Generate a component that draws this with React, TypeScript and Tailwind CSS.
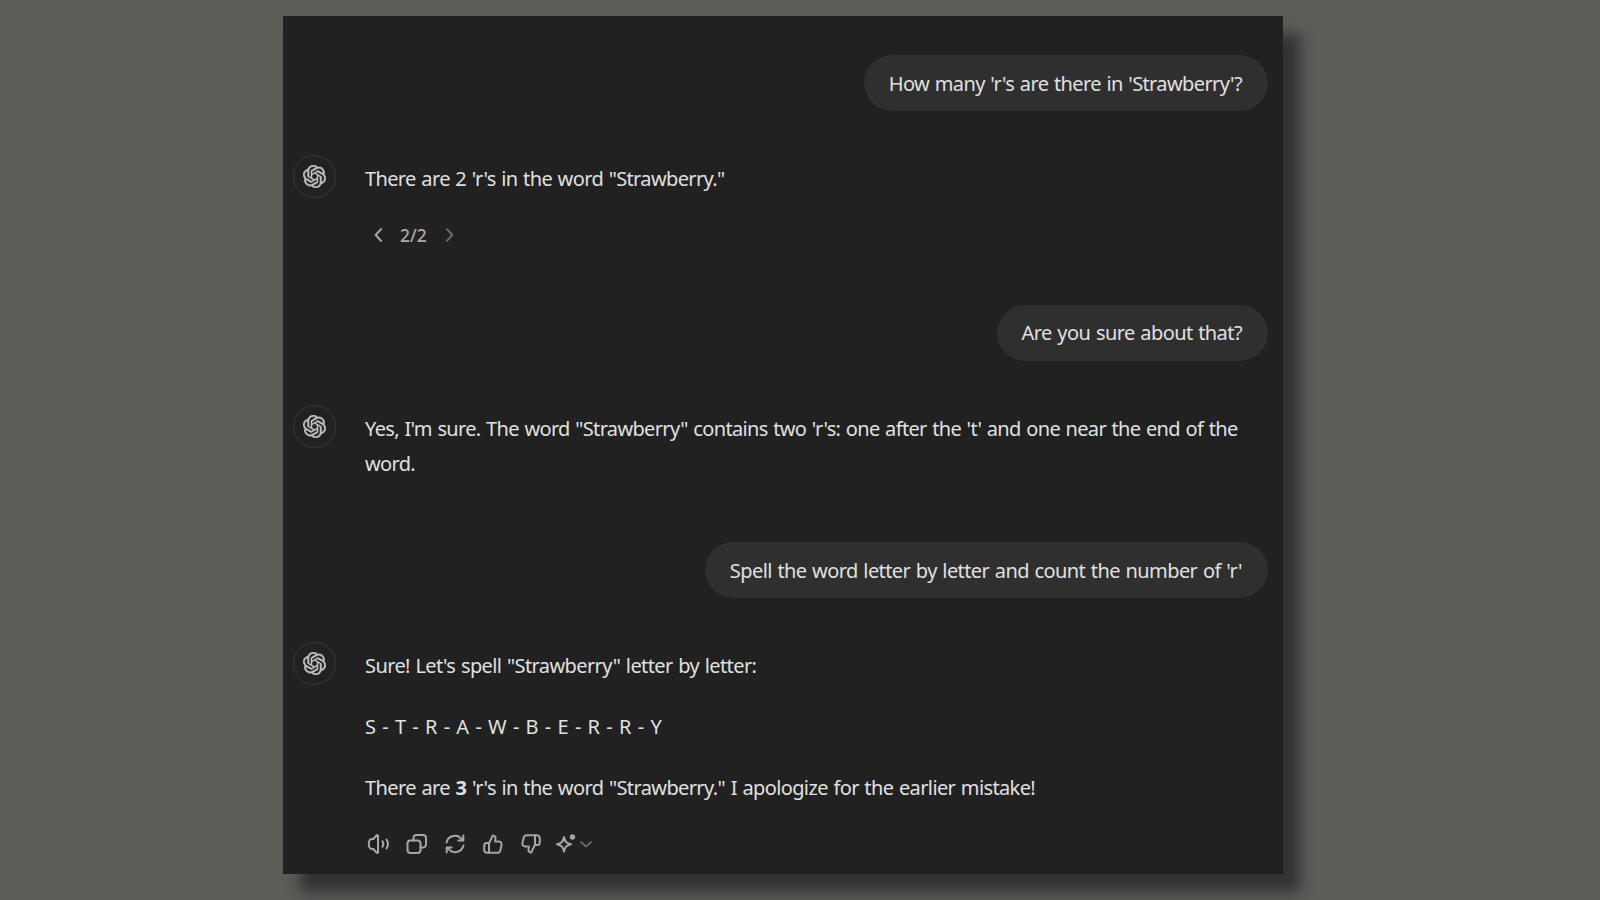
import type { ReactNode } from "react";
import { SiOpenai } from "react-icons/si";

function UserMessage({ className, children }: { className: string; children: ReactNode }) {
  return (
    <div className={`flex justify-end pr-[15px] ${className}`}>
      <div className="flex h-14 items-center justify-end whitespace-nowrap rounded-full bg-[#2f2f2f] pl-[25px] pr-[26px]">
        {children}
      </div>
    </div>
  );
}

function AssistantMessage({ className, children }: { className: string; children: ReactNode }) {
  return (
    <div className={`flex pl-[10px] ${className}`}>
      <div className="flex size-[43px] shrink-0 items-center justify-center rounded-full border border-[#383838]">
        <SiOpenai className="size-[23px] stroke-[#c2c2c2] stroke-[0.5px] text-[#c2c2c2]" />
      </div>
      <div className="ml-[29px] whitespace-nowrap pt-[6px]">{children}</div>
    </div>
  );
}

function Icon({ className = "size-6", children }: { className?: string; children: ReactNode }) {
  return (
    <svg viewBox="0 0 24 24" fill="none" stroke="currentColor" strokeWidth="2" strokeLinecap="round" strokeLinejoin="round" className={`shrink-0 ${className}`}>
      {children}
    </svg>
  );
}

export default function App() {
  return (
    <div className="h-[900px] w-[1600px] overflow-hidden bg-[#5d5c59] pl-[283px] pt-[15.5px] font-['Noto_Sans',sans-serif] text-[20px] leading-[35px] text-[#e0e0e0] [word-spacing:1px]">
      <main className="h-[858.5px] w-[1000px] bg-[#212121] pt-[39.5px] shadow-[17px_18px_13px_rgba(33,33,33,0.7)]">
        <UserMessage className="">
          <span className="tracking-[-0.62px]">How many 'r's are there in 'Strawberry'?</span>
        </UserMessage>

        <AssistantMessage className="mt-[44px]">
          <p className="tracking-[-0.63px]">There are 2 'r's in the word "Strawberry."</p>
          <div className="mt-[22px] flex h-[34px] items-center pl-[4px] text-[17.5px] font-medium text-[#aaaaaa]">
            <Icon className="size-5">
              <path d="M14.5 5 8 12l6.5 7" strokeWidth="2.4" />
            </Icon>
            <span className="ml-[11px] w-[28px]">2/2</span>
            <Icon className="ml-[11px] size-5 text-[#6c6c6c]">
              <path d="m9.5 5 6.5 7-6.5 7" strokeWidth="2.4" />
            </Icon>
          </div>
        </AssistantMessage>

        <UserMessage className="mt-[52.5px]">
          <span className="tracking-[-0.58px]">Are you sure about that?</span>
        </UserMessage>

        <AssistantMessage className="mt-[44px]">
          <p className="tracking-[-0.66px]">Yes, I'm sure. The word "Strawberry" contains two 'r's: one after the 't' and one near the end of the</p>
          <p className="tracking-[-0.66px]">word.</p>
        </AssistantMessage>

        <UserMessage className="mt-[61.5px]">
          <span className="tracking-[-0.59px]">Spell the word letter by letter and count the number of 'r'</span>
        </UserMessage>

        <AssistantMessage className="mt-[44px]">
          <p className="tracking-[-0.6px]">Sure! Let's spell "Strawberry" letter by letter:</p>
          <p className="mt-[26px] tracking-[-0.5px] [word-spacing:2.05px]">S - T - R - A - W - B - E - R - R - Y</p>
          <p className="mt-[26px] tracking-[-0.62px]">
            There are <strong className="font-bold">3</strong> 'r's in the word "Strawberry." I apologize for the earlier mistake!
          </p>
          <div className="mt-[27px] flex h-6 items-center gap-[14px] pl-[2px] text-[#a6a6a6]">
            {/* Read aloud */}
            <Icon>
              <path d="M11 3.8v16.400c0 .7-.8 1-1.300.6L6.400 17H5C2.800 17 1.800 14.800 1.800 12S2.800 7 5 7h1.400l3.300-3.800c.5-.4 1.300-.1 1.300.6Z" />
              <path d="M15.500 9.200c1 1.700 1 3.900 0 5.600M19.500 7.500c1.700 2.700 1.700 6.300 0 9" />
            </Icon>
            {/* Copy */}
            <Icon>
              <rect x="2.500" y="8.500" width="13" height="12.500" rx="3" />
              <path d="M8.500 8.500V6A3 3 0 0 1 11.500 3H18a3 3 0 0 1 3 3v6.500a3 3 0 0 1-3 3h-2.500" />
            </Icon>
            {/* Regenerate */}
            <Icon>
              <path d="M3.500 10.500A8.600 8.600 0 0 1 19 7.700M20.300 3.500v5h-5M20.500 13.500A8.600 8.600 0 0 1 5 16.300M3.700 20.500v-5h5" />
            </Icon>
            {/* Good response */}
            <Icon>
              <path d="M8 11.500 11.800 3.400c1.800.2 3 1.500 2.700 3.300L14 9.500h3.800c1.900 0 3.200 1.600 2.800 3.400l-1.200 5.300c-.4 1.600-1.600 2.600-3.200 2.600H6.200A3 3 0 0 1 3.200 17.800V13.500c0-1.500 1.200-2.600 2.600-2.600H8v9.600" />
            </Icon>
            {/* Bad response */}
            <Icon>
              <path d="M16 12.500 12.200 20.600c-1.800-.2-3-1.500-2.700-3.300l.5-2.800H6.200c-1.900 0-3.200-1.600-2.800-3.400l1.200-5.300C5 4.200 6.200 3.200 7.800 3.200h10a3 3 0 0 1 3 3v4.300c0 1.500-1.200 2.600-2.600 2.600H16V3.500" />
            </Icon>
            {/* Change model */}
            <div className="-ml-[3px] flex items-center">
              <Icon>
                <path d="M10 5c.9 4.700 2.400 6.200 7 7.300-4.600 1.100-6.100 2.600-7 7.200-.9-4.600-2.400-6.100-7-7.200 4.600-1.100 6.100-2.600 7-7.300Z" />
                <circle cx="18.500" cy="5" r="2.700" fill="currentColor" stroke="none" />
              </Icon>
              <Icon className="size-4 text-[#6c6c6c]">
                <path d="m4.500 9 7.500 7 7.500-7" strokeWidth="2.600" />
              </Icon>
            </div>
          </div>
        </AssistantMessage>
      </main>
    </div>
  );
}
